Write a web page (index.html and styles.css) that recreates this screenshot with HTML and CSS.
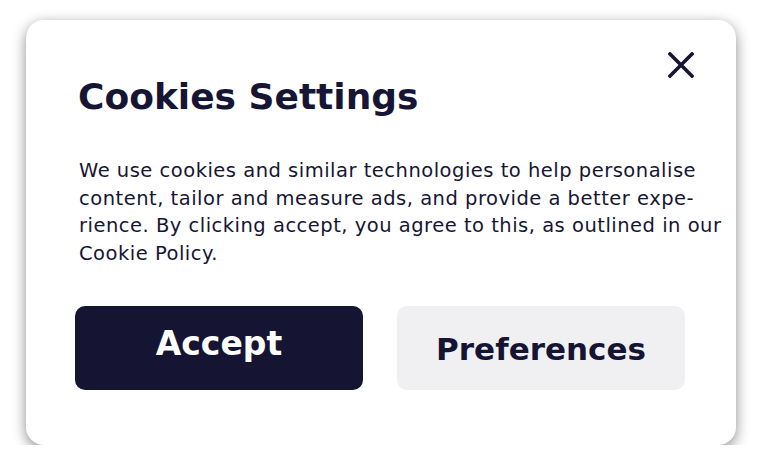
FILE: index.html
```html
<!DOCTYPE html>
<html lang="en">
  <head>
    <meta charset="UTF-8" />
    <meta name="viewport" content="width=device-width, initial-scale=1" />
    <title>Cookies Settings</title>
    <link rel="stylesheet" href="styles.css">
  </head>

  <body>
    <!-- Cookie dialog -->
    <div class="cookie-card">
      <div class="cookie-header">
        <h1>Cookies Settings</h1>
        <button class="close-button" aria-label="Close">
          <svg width="26" height="26" viewBox="0 0 26 26">
            <path d="M2 2 L24 24 M24 2 L2 24" stroke="#161634" stroke-width="3.6" stroke-linecap="square" fill="none" />
          </svg>
        </button>
      </div>

      <p class="cookie-text">
        We use cookies and similar technologies to help personalise<br>
        content, tailor and measure ads, and provide a better expe-<br>
        rience. By clicking accept, you agree to this, as outlined in our<br>
        Cookie Policy.
      </p>

      <div class="cookie-actions">
        <button class="btn btn-accept">Accept</button>
        <button class="btn btn-prefs">Preferences</button>
      </div>
    </div>
  </body>
</html>
```

FILE: styles.css
```css
/* Global Styles */
body {
  font-family: 'DejaVu Sans', 'Noto Sans', sans-serif;
  margin: 0;
  padding: 20px 0 0 26px;
  background-color: #fff;
  color: #161634;
}

.cookie-card {
  width: 710px;
  height: 425px;
  box-sizing: border-box;
  background: #fff;
  border-radius: 18px;
  box-shadow: 0 4px 14px rgba(0, 0, 0, 0.45);
  padding: 32px 51px 0 49px;
}

.cookie-header {
  display: flex;
  justify-content: space-between;
  align-items: flex-start;
}

.cookie-header h1 {
  margin: 25px 0 0 3px;
  font-size: 36px;
  font-weight: 700;
  line-height: 40px;
}

.close-button {
  background: none;
  border: none;
  padding: 0;
  margin-right: -9px;
  cursor: pointer;
  line-height: 0;
}

.cookie-text {
  margin: 40px 0 0 4px;
  font-size: 19.5px;
  letter-spacing: 0.5px;
  line-height: 27.5px;
  white-space: nowrap;
}

.cookie-actions {
  display: grid;
  grid-template-columns: 288px 288px;
  gap: 34px;
  margin-top: 39px;
}

.btn {
  height: 84px;
  border: none;
  border-radius: 10px;
  font-family: inherit;
  font-size: 31px;
  font-weight: 700;
  cursor: pointer;
}

.btn-accept {
  background-color: #151533;
  color: #fff;
  font-size: 33px;
  padding-bottom: 10px;
}

.btn-prefs {
  background-color: #f0f0f3;
  color: #151533;
  padding-top: 2px;
}
```
